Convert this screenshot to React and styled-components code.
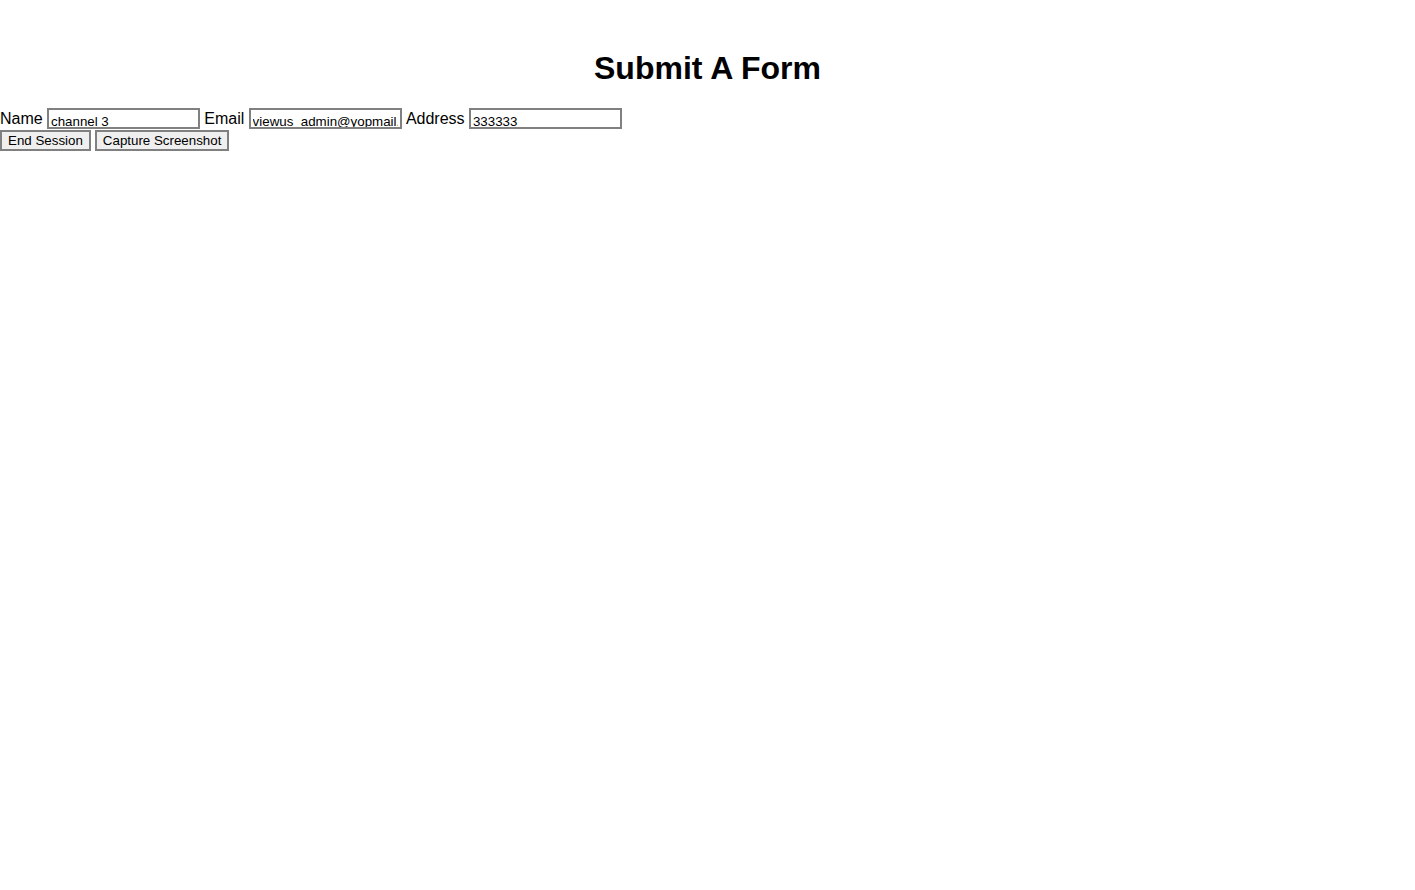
import React from "react";
import styled, { createGlobalStyle } from "styled-components";

const Global = createGlobalStyle`
  html, body { margin: 0; padding: 0; background: #fff; }
  body { font-family: "Liberation Sans", Arial, sans-serif; color: #000; }
`;

const Page = styled.div`
  padding-top: 50px;
`;

const Title = styled.h1`
  margin: 0 0 21px;
  text-align: center;
  font-size: 32px;
  font-weight: bold;
  line-height: 37px;
`;

const Row = styled.div`
  display: flex;
  align-items: flex-end;
  gap: 4.3px;
  font-size: 16px;
  line-height: 18px;
`;

const Label = styled.label`
  font-size: 16px;
  margin-bottom: 1px;
`;

const Input = styled.input`
  box-sizing: border-box;
  width: 153px;
  height: 21px;
  margin: 0;
  padding: 5px 2px 0;
  border: 2px solid #808080;
  font-family: "Liberation Sans", Arial, sans-serif;
  font-size: 13.333px;
  line-height: 15px;
  color: #000;
  background: #fff;
  overflow: hidden;
  outline: none;
`;

const Buttons = styled.div`
  display: flex;
  gap: 4px;
  margin-top: 1px;
`;

const Button = styled.button`
  box-sizing: border-box;
  height: 21px;
  margin: 0;
  padding: 0 6px;
  border: 2px solid #808080;
  background: #efefef;
  font-family: "Liberation Sans", Arial, sans-serif;
  font-size: 13.333px;
  color: #000;
`;

export default function App() {
  return (
    <Page>
      <Global />
      <Title>Submit A Form</Title>
      <Row>
        <Label>Name</Label>
        <Input defaultValue="channel 3" />
        <Label>Email</Label>
        <Input defaultValue="viewus_admin@yopmail.com" />
        <Label>Address</Label>
        <Input defaultValue="333333" />
      </Row>
      <Buttons>
        <Button>End Session</Button>
        <Button>Capture Screenshot</Button>
      </Buttons>
    </Page>
  );
}
